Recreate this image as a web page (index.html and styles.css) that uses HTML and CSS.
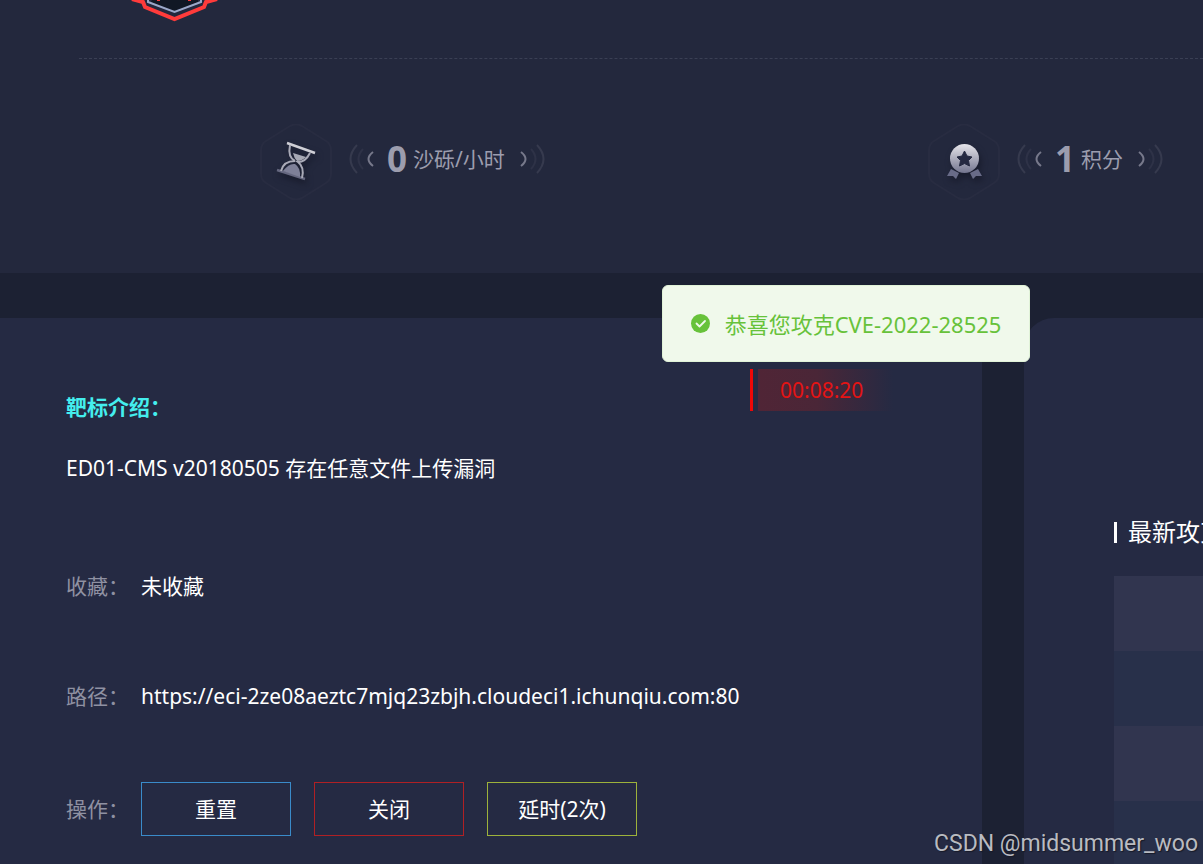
FILE: index.html
```html
<!DOCTYPE html>
<html lang="zh-CN">
<head>
  <meta charset="utf-8">
  <title>CVE-2022-28525</title>
  <link rel="stylesheet" href="styles.css">
</head>
<body>
  <header class="summary">
    <div class="badge-row">
      <svg class="badge" width="110" height="22" viewBox="0 0 110 22">
        <path d="M32 0H78V2L54.500 12L31 2Z" fill="#111825"/>
        <path d="M28 0V2L54.500 12L81 2V0" fill="none" stroke="#9ba8c9" stroke-width="2"/>
        <path d="M12 -1L23 2L25 7L54.500 19L84 7L86 2L97 -1" fill="none" stroke="#ff3b3b" stroke-width="4"/>
        <path d="M37 0h3v1h-3zM68 0h3v1h-3z" fill="#ff3b3b"/>
      </svg>
    </div>
    <div class="stats">
      <div class="stat">
        <svg class="hexagon" width="72" height="76" viewBox="0 0 72 76">
          <defs>
            <linearGradient id="silver" x1="0" y1="0" x2="0" y2="1">
              <stop offset="0" stop-color="#e6e5ea"/>
              <stop offset="1" stop-color="#73758f"/>
            </linearGradient>
          </defs>
          <path class="hexagon-line" d="M30 2Q36 -1 42 2L66 17Q71 20 71 26V50Q71 56 66 59L42 74Q36 77 30 74L6 59Q1 56 1 50V26Q1 20 6 17Z"/>
          <g class="icon-shadow">
            <path d="M27 19L55 29" stroke="#cfcfd6" stroke-width="2.500"/>
            <path d="M17 46L45 55" stroke="#65677f" stroke-width="2.500"/>
            <path d="M30 21C28 31 31 35 35 37C29 37 23 39 21 47M50 29C47 35 43 38 38 38C42 41 44 46 42 54" fill="none" stroke="#a9aab7" stroke-width="2"/>
            <path d="M33 29L46 33Q42 37 37 37Q34 34 33 29Z" fill="#a6a8b4"/>
            <path d="M23 47Q29 39 35 40Q41 44 40 53Z" fill="#7e8098"/>
          </g>
        </svg>
        <svg class="wave" width="26" height="30" viewBox="0 0 26 30">
          <path class="wave-far" d="M8 1Q-5 15 8 29"/>
          <path class="wave-mid" d="M14 5Q5 15 14 25"/>
          <path class="wave-near" d="M24 8Q15 15 24 22"/>
        </svg>
        <strong>0</strong>
        <span class="unit">沙砾/小时</span>
        <svg class="wave wave-right" width="26" height="30" viewBox="0 0 26 30">
          <path class="wave-far" d="M18 1Q31 15 18 29"/>
          <path class="wave-mid" d="M12 5Q21 15 12 25"/>
          <path class="wave-near" d="M2 8Q11 15 2 22"/>
        </svg>
      </div>
      <div class="stat">
        <svg class="hexagon" width="72" height="76" viewBox="0 0 72 76">
          <path class="hexagon-line" d="M30 2Q36 -1 42 2L66 17Q71 20 71 26V50Q71 56 66 59L42 74Q36 77 30 74L6 59Q1 56 1 50V26Q1 20 6 17Z"/>
          <g class="icon-shadow">
            <path d="M23 45L31 49L28 55L25 52L19 52ZM50 45L42 49L45 55L48 52L54 52Z" fill="#686b88"/>
            <circle cx="36.500" cy="34.500" r="14.500" fill="url(#silver)"/>
            <path d="M36.500 27L39 32L44 33L40.500 36.500L41.500 42L36.500 39.500L31.500 42L32.500 36.500L29 33L34 32Z" fill="#252941" stroke="#252941" stroke-linejoin="round"/>
          </g>
        </svg>
        <svg class="wave" width="26" height="30" viewBox="0 0 26 30">
          <path class="wave-far" d="M8 1Q-5 15 8 29"/>
          <path class="wave-mid" d="M14 5Q5 15 14 25"/>
          <path class="wave-near" d="M24 8Q15 15 24 22"/>
        </svg>
        <strong>1</strong>
        <span class="unit">积分</span>
        <svg class="wave wave-right" width="26" height="30" viewBox="0 0 26 30">
          <path class="wave-far" d="M18 1Q31 15 18 29"/>
          <path class="wave-mid" d="M12 5Q21 15 12 25"/>
          <path class="wave-near" d="M2 8Q11 15 2 22"/>
        </svg>
      </div>
    </div>
  </header>

  <main class="content">
    <section class="target">
      <time class="timer">00:08:20</time>
      <h2>靶标介绍：</h2>
      <p class="description">ED01-CMS v20180505 存在任意文件上传漏洞</p>
      <dl class="details">
        <div class="detail favorite">
          <dt>收藏：</dt>
          <dd>未收藏</dd>
        </div>
        <div class="detail path">
          <dt>路径：</dt>
          <dd><a href="https://eci-2ze08aeztc7mjq23zbjh.cloudeci1.ichunqiu.com:80">https://eci-2ze08aeztc7mjq23zbjh.cloudeci1.ichunqiu.com:80</a></dd>
        </div>
        <div class="detail">
          <dt>操作：</dt>
          <dd class="actions">
            <button class="reset" type="button">重置</button>
            <button class="close" type="button">关闭</button>
            <button class="delay" type="button">延时(2次)</button>
          </dd>
        </div>
      </dl>
    </section>

    <aside class="latest">
      <h3>最新攻克</h3>
      <ul class="records">
        <li></li>
        <li></li>
        <li></li>
        <li></li>
      </ul>
    </aside>
  </main>

  <div class="message" role="alert">
    <svg width="19" height="19" viewBox="0 0 19 19">
      <circle cx="9.500" cy="9.500" r="9.500" fill="#67c23a"/>
      <path d="M5.500 9.500L8.500 12.500L14 7" fill="none" stroke="#f0f9eb" stroke-width="1.800" stroke-linecap="round" stroke-linejoin="round"/>
    </svg>
    <span>恭喜您攻克CVE-2022-28525</span>
  </div>

  <div class="watermark">CSDN @midsummer_woo</div>
</body>
</html>
```
FILE: styles.css
```css
* {
  box-sizing: border-box;
}

body {
  margin: 0;
  min-height: 100vh;
  display: flex;
  flex-direction: column;
  overflow: hidden;
  background-color: #1c2133;
  color: #ffffff;
  font-family: "Noto Sans", "Noto Sans CJK SC", sans-serif;
  font-size: 21px;
  line-height: 30px;
}

h2, h3, p, dl, dd, ul {
  margin: 0;
  padding: 0;
}

svg {
  display: block;
  flex-shrink: 0;
}

.summary {
  padding-bottom: 73px;
  background-color: #23283d;
}

.badge-row {
  height: 59px;
  margin-left: 79px;
  padding-left: 41px;
  border-bottom: 1px dashed #3a3f54;
}

.stats {
  display: grid;
  grid-template-columns: 668px 1fr;
  padding: 65px 0 0 260px;
}

.stat {
  display: flex;
  align-items: center;
  color: #9c9dae;
  white-space: nowrap;
}

.hexagon-line {
  fill: none;
  stroke: #282c41;
  stroke-width: 2;
}

.icon-shadow {
  filter: drop-shadow(2px 4px 3px #181b2c);
}

.wave {
  margin: 0 12px 6px 17px;
  fill: none;
  stroke-width: 2;
}

.wave-right {
  margin: 0 0 6px 14px;
}

.wave-far {
  stroke: #363a4e;
}

.wave-mid {
  stroke: #2e3247;
}

.wave-near {
  stroke: #77798b;
  stroke-width: 2;
}

.stat strong {
  margin-right: 6px;
  padding-bottom: 6px;
  font-size: 35px;
}

.unit {
  padding-bottom: 6px;
}

.content {
  flex: 1;
  display: grid;
  grid-template-columns: 982fr 179fr;
  gap: 42px;
  margin-top: 45px;
}

.target {
  position: relative;
  padding: 74px 66px 0;
  background-color: #252a43;
}

.target h2 {
  color: #44eeee;
  font-size: 21px;
  line-height: 30px;
}

.description {
  margin-top: 31px;
}

.details {
  margin-top: 88px;
}

.detail {
  display: flex;
  align-items: center;
}

.detail dt {
  width: 75px;
  color: #8f91a2;
}

.favorite {
  margin-bottom: 80px;
}

.path {
  margin-bottom: 71px;
}

.detail a {
  color: #ffffff;
  text-decoration: none;
}

.actions {
  display: flex;
  gap: 23px;
}

.actions button {
  width: 150px;
  height: 54px;
  padding: 0;
  border: 1px solid;
  background: none;
  color: #ffffff;
  font: inherit;
  cursor: pointer;
}

.actions .reset {
  border-color: #3a8bca;
}

.actions .close {
  border-color: #b02024;
}

.actions .delay {
  border-color: #9db23b;
}

.timer {
  position: absolute;
  top: 51px;
  left: 750px;
  width: 150px;
  height: 42px;
  padding-left: 27px;
  border-left: 3px solid #ee0808;
  background: linear-gradient(90deg, #502536, #4a2637 40%, #252a43 92%) 5px 0 no-repeat;
  color: #e41414;
  line-height: 42px;
}

.latest {
  padding: 199px 0 0 90px;
  overflow: hidden;
  border-top-left-radius: 30px;
  background-color: #252a43;
}

.latest h3 {
  display: flex;
  align-items: center;
  gap: 11px;
  font-size: 24px;
  font-weight: 400;
  white-space: nowrap;
}

.latest h3::before {
  content: "";
  flex-shrink: 0;
  width: 3px;
  height: 21px;
  background-color: #ffffff;
}

.records {
  margin-top: 29px;
  list-style: none;
}

.records li {
  height: 75px;
  background-color: #28304a;
}

.records li:nth-child(odd) {
  background-color: #31354f;
}

.message {
  position: absolute;
  top: 285px;
  left: 55%;
  display: flex;
  align-items: center;
  gap: 15px;
  height: 77px;
  padding: 0 28px;
  border: 1px solid #e1f3d8;
  border-radius: 6px;
  background-color: #f0f9eb;
  color: #67c23a;
  font-size: 22px;
  white-space: nowrap;
}

.watermark {
  position: absolute;
  right: 5px;
  bottom: 5px;
  color: #b9bbc1;
  font-family: Roboto, "Liberation Sans", sans-serif;
  font-size: 23px;
  text-shadow: 1px 1px 1px #171a28;
}
```
